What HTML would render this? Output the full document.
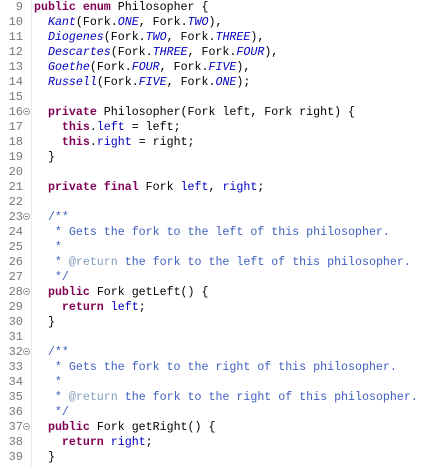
<!DOCTYPE html>
<html><head><meta charset="utf-8"><style>
html,body{margin:0;padding:0;background:#fff;width:434px;height:466px;overflow:hidden}
.g{position:absolute;left:31px;top:0;width:1px;height:466px;background:#e8e8e8}
.ln{position:absolute;left:0;width:23px;text-align:right;color:#787878;font:12px/15px "Liberation Mono",monospace}
.c{position:absolute;left:34px;white-space:pre;color:#000;font:12px/15px "Liberation Mono",monospace;transform:scaleX(0.969);transform-origin:0 0}
.k{color:#7f0055;font-weight:bold}
.e{color:#0000c0;font-style:italic}
.f{color:#0000c0}
.d{color:#3f5fbf}
.t{color:#7f9fbf}
.fo{position:absolute;left:23px;width:7px;height:7px;border:1px solid #a0a0a0;border-radius:50%;box-sizing:border-box}
.fo:after{content:"";position:absolute;left:1px;top:2px;width:3px;height:1px;background:#808080}
</style></head><body>
<div class="g"></div>
<div class="ln" style="top:0">9</div><div class="c" style="top:0"><span class="k">public</span> <span class="k">enum</span> Philosopher {</div>
<div class="ln" style="top:15px">10</div><div class="c" style="top:15px">  <span class="e">Kant</span>(Fork.<span class="e">ONE</span>, Fork.<span class="e">TWO</span>),</div>
<div class="ln" style="top:30px">11</div><div class="c" style="top:30px">  <span class="e">Diogenes</span>(Fork.<span class="e">TWO</span>, Fork.<span class="e">THREE</span>),</div>
<div class="ln" style="top:45px">12</div><div class="c" style="top:45px">  <span class="e">Descartes</span>(Fork.<span class="e">THREE</span>, Fork.<span class="e">FOUR</span>),</div>
<div class="ln" style="top:60px">13</div><div class="c" style="top:60px">  <span class="e">Goethe</span>(Fork.<span class="e">FOUR</span>, Fork.<span class="e">FIVE</span>),</div>
<div class="ln" style="top:75px">14</div><div class="c" style="top:75px">  <span class="e">Russell</span>(Fork.<span class="e">FIVE</span>, Fork.<span class="e">ONE</span>);</div>
<div class="ln" style="top:90px">15</div>
<div class="ln" style="top:105px">16</div><div class="fo" style="top:108px"></div><div class="c" style="top:105px">  <span class="k">private</span> Philosopher(Fork left, Fork right) {</div>
<div class="ln" style="top:120px">17</div><div class="c" style="top:120px">    <span class="k">this</span>.<span class="f">left</span> = left;</div>
<div class="ln" style="top:135px">18</div><div class="c" style="top:135px">    <span class="k">this</span>.<span class="f">right</span> = right;</div>
<div class="ln" style="top:150px">19</div><div class="c" style="top:150px">  }</div>
<div class="ln" style="top:165px">20</div>
<div class="ln" style="top:180px">21</div><div class="c" style="top:180px">  <span class="k">private</span> <span class="k">final</span> Fork <span class="f">left</span>, <span class="f">right</span>;</div>
<div class="ln" style="top:195px">22</div>
<div class="ln" style="top:210px">23</div><div class="fo" style="top:213px"></div><div class="c d" style="top:210px">  /**</div>
<div class="ln" style="top:225px">24</div><div class="c d" style="top:225px">   * Gets the fork to the left of this philosopher.</div>
<div class="ln" style="top:240px">25</div><div class="c d" style="top:240px">   *</div>
<div class="ln" style="top:255px">26</div><div class="c d" style="top:255px">   * <span class="t">@return</span> the fork to the left of this philosopher.</div>
<div class="ln" style="top:270px">27</div><div class="c d" style="top:270px">   */</div>
<div class="ln" style="top:285px">28</div><div class="fo" style="top:288px"></div><div class="c" style="top:285px">  <span class="k">public</span> Fork getLeft() {</div>
<div class="ln" style="top:300px">29</div><div class="c" style="top:300px">    <span class="k">return</span> <span class="f">left</span>;</div>
<div class="ln" style="top:315px">30</div><div class="c" style="top:315px">  }</div>
<div class="ln" style="top:330px">31</div>
<div class="ln" style="top:345px">32</div><div class="fo" style="top:348px"></div><div class="c d" style="top:345px">  /**</div>
<div class="ln" style="top:360px">33</div><div class="c d" style="top:360px">   * Gets the fork to the right of this philosopher.</div>
<div class="ln" style="top:375px">34</div><div class="c d" style="top:375px">   *</div>
<div class="ln" style="top:390px">35</div><div class="c d" style="top:390px">   * <span class="t">@return</span> the fork to the right of this philosopher.</div>
<div class="ln" style="top:405px">36</div><div class="c d" style="top:405px">   */</div>
<div class="ln" style="top:420px">37</div><div class="fo" style="top:423px"></div><div class="c" style="top:420px">  <span class="k">public</span> Fork getRight() {</div>
<div class="ln" style="top:435px">38</div><div class="c" style="top:435px">    <span class="k">return</span> <span class="f">right</span>;</div>
<div class="ln" style="top:450px">39</div><div class="c" style="top:450px">  }</div>
</body></html>
